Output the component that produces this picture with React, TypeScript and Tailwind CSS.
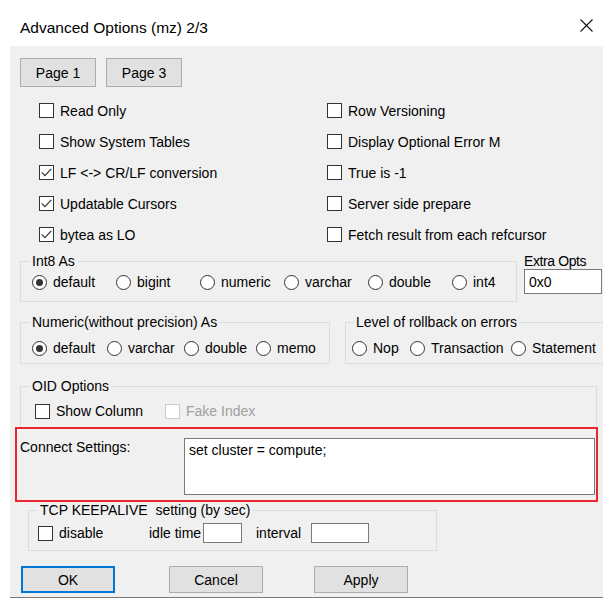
import React from "react";

type BoxProps = { checked?: boolean; disabled?: boolean };

function Box({ checked = false, disabled = false }: BoxProps) {
  return (
    <span
      className={`flex h-[15px] w-[15px] shrink-0 items-center justify-center border bg-white ${
        disabled ? "border-[#cccccc]" : "border-[#333333]"
      }`}
    >
      {checked && (
        <svg width="13" height="13" viewBox="0 0 13 13">
          <path d="M1.8 6.4 L4.9 9.6 L11.3 2.8" fill="none" stroke="#333333" strokeWidth="1.2" />
        </svg>
      )}
    </span>
  );
}

function CheckBox({ label, checked, disabled }: BoxProps & { label: string }) {
  return (
    <div className="flex h-full items-center gap-[6px]">
      <Box checked={checked} disabled={disabled} />
      <span className={`whitespace-nowrap ${disabled ? "text-[#a0a0a0]" : ""}`}>{label}</span>
    </div>
  );
}

function Radio({ label, checked = false, className = "" }: { label: string; checked?: boolean; className?: string }) {
  return (
    <div className={`flex h-[20px] shrink-0 items-center gap-[6px] ${className}`}>
      <span className="flex h-[15px] w-[15px] shrink-0 items-center justify-center rounded-full border border-[#333333] bg-white">
        {checked && <span className="h-[7px] w-[7px] rounded-full bg-[#333333]" />}
      </span>
      <span className="whitespace-nowrap">{label}</span>
    </div>
  );
}

function Group({
  title,
  className = "",
  legendClass = "ml-[9px]",
  children,
}: {
  title: string;
  className?: string;
  legendClass?: string;
  children: React.ReactNode;
}) {
  return (
    <fieldset className={`min-w-0 border border-[#dcdcdc] ${className}`}>
      <legend className={`whitespace-pre px-[2px] leading-[14px] ${legendClass}`}>{title}</legend>
      {children}
    </fieldset>
  );
}

function Button({ label, primary = false, className = "" }: { label: string; primary?: boolean; className?: string }) {
  return (
    <button
      className={`flex h-[27px] w-[94px] items-center justify-center bg-[#e1e1e1] ${
        primary ? "border-2 border-[#0078d7]" : "border border-[#adadad]"
      } ${className}`}
    >
      {label}
    </button>
  );
}

const options: [string, boolean][] = [
  ["Read Only", false],
  ["Row Versioning", false],
  ["Show System Tables", false],
  ["Display Optional Error M", false],
  ["LF <-> CR/LF conversion", true],
  ["True is -1", false],
  ["Updatable Cursors", true],
  ["Server side prepare", false],
  ["bytea as LO", true],
  ["Fetch result from each refcursor", false],
];

export default function App() {
  return (
    <div className="h-[608px] w-[613px] overflow-hidden bg-white font-['Liberation_Sans',sans-serif] text-black">
      {/* title bar */}
      <div className="flex h-[46px] items-start justify-between pl-[20px] pr-[20px] pt-[19px]">
        <span className="text-[15.5px] leading-[18px]">Advanced Options (mz) 2/3</span>
        <svg width="13" height="13" viewBox="0 0 13 13">
          <path d="M0.5 0.5 L12.5 12.5 M12.5 0.5 L0.5 12.5" stroke="#111111" strokeWidth="1.1" />
        </svg>
      </div>

      <div className="ml-[10px] h-[552px] w-[593px] border-b border-[#7a7a7a] bg-[#f0f0f0] pt-[12px] text-[14px] leading-[14px]">
        {/* page buttons */}
        <div className="flex gap-[10px] pl-[10px]">
          <button className="h-[29px] w-[76px] border border-[#adadad] bg-[#e1e1e1]">Page 1</button>
          <button className="h-[29px] w-[76px] border border-[#adadad] bg-[#e1e1e1]">Page 3</button>
        </div>

        {/* checkboxes */}
        <div className="mt-[8px] grid grid-cols-[288px_1fr] pl-[29px]">
          {options.map(([label, checked]) => (
            <div key={label} className="h-[31px]">
              <CheckBox label={label} checked={checked} />
            </div>
          ))}
        </div>

        {/* Int8 As + Extra Opts */}
        <div className="mt-[4px] flex gap-[7px] pl-[10px]">
          <Group title="Int8 As" className="w-[497px] shrink-0">
            <div className="grid grid-cols-[84px_84px_84px_84px_84px_1fr] pb-[9px] pl-[11px] pt-[4px]">
              <Radio label="default" checked />
              <Radio label="bigint" />
              <Radio label="numeric" />
              <Radio label="varchar" />
              <Radio label="double" />
              <Radio label="int4" />
            </div>
          </Group>
          <div className="w-[78px] shrink-0">
            <div className="whitespace-nowrap tracking-[-0.4px]">Extra Opts</div>
            <div className="mt-[1px] flex h-[25px] items-center border border-[#7a7a7a] bg-white pl-[4px]">0x0</div>
          </div>
        </div>

        {/* Numeric / rollback */}
        <div className="mt-[13px] flex gap-[15px] pl-[10px]">
          <Group title="Numeric(without precision) As" className="w-[310px] shrink-0">
            <div className="flex pb-[5px] pl-[11px] pt-[9px]">
              <Radio label="default" checked className="w-[75px]" />
              <Radio label="varchar" className="w-[77px]" />
              <Radio label="double" className="w-[72px]" />
              <Radio label="memo" />
            </div>
          </Group>
          <Group title="Level of rollback on errors" className="flex-1 border-r-0" legendClass="ml-[8px]">
            <div className="flex pb-[5px] pl-[6px] pt-[9px]">
              <Radio label="Nop" className="w-[58px]" />
              <Radio label="Transaction" className="w-[101px]" />
              <Radio label="Statement" />
            </div>
          </Group>
        </div>

        {/* OID */}
        <Group title="OID Options" className="ml-[10px] mt-[15px] w-[577px]">
          <div className="box-content flex h-[20px] pb-[6px] pl-[14px] pt-[8px]">
            <div className="w-[130px]">
              <CheckBox label="Show Column" />
            </div>
            <CheckBox label="Fake Index" disabled />
          </div>
        </Group>

        {/* Connect settings (highlighted) */}
        <div className="relative ml-[5px] mt-[-1px] flex h-[75px] w-[583px] items-start border-2 border-[#e8282e] pl-[3px] pt-[9px]">
          <div className="w-[164px] whitespace-nowrap pt-[2px]">Connect Settings:</div>
          <div className="h-[57px] w-[411px] border border-[#7a7a7a] bg-white pl-[4px] pt-[4px]">
            set cluster = compute;
          </div>
        </div>

        {/* TCP keepalive */}
        <Group title="TCP KEEPALIVE  setting (by sec)" className="ml-[18px] mt-[1px] w-[409px]">
          <div className="box-content flex h-[20px] items-center pb-[7px] pl-[9px] pt-[6px]">
            <div className="w-[111px]">
              <CheckBox label="disable" />
            </div>
            <span className="w-[54px] whitespace-nowrap">idle time</span>
            <div className="h-[20px] w-[39px] border border-[#7a7a7a] bg-white" />
            <span className="ml-[14px] w-[55px] whitespace-nowrap">interval</span>
            <div className="h-[20px] w-[58px] border border-[#7a7a7a] bg-white" />
          </div>
        </Group>

        {/* dialog buttons */}
        <div className="mt-[15px] flex pl-[11px]">
          <Button label="OK" primary />
          <Button label="Cancel" className="ml-[54px]" />
          <Button label="Apply" className="ml-[51px]" />
        </div>
      </div>
    </div>
  );
}
